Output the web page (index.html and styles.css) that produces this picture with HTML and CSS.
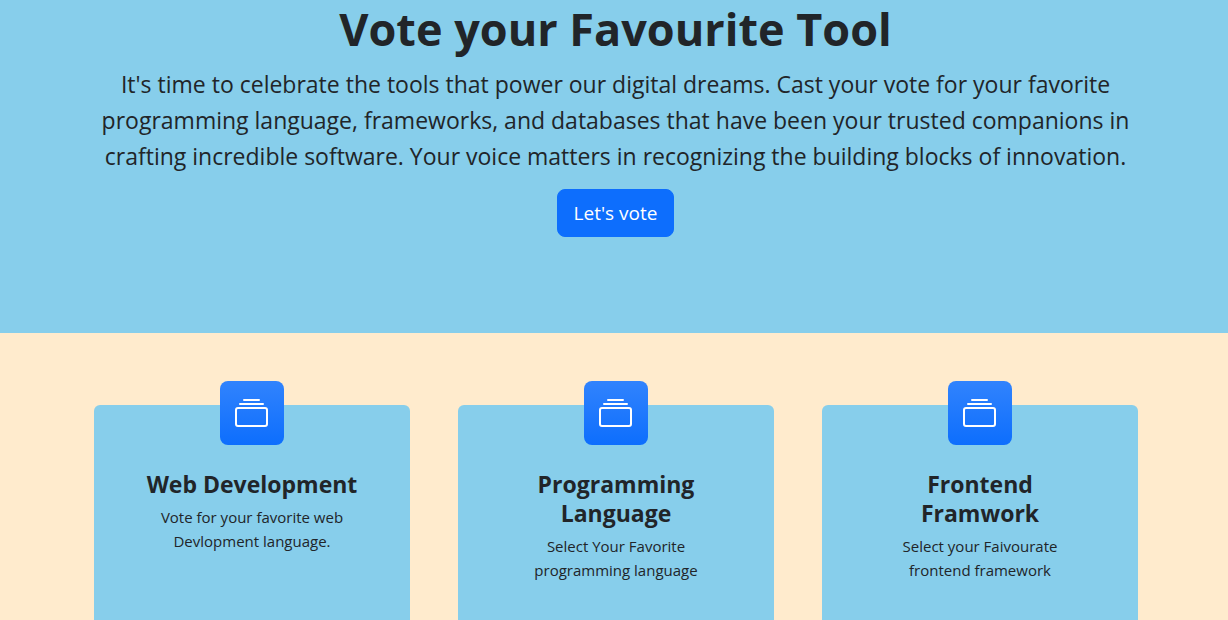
FILE: index.html
```html
<!DOCTYPE html>
<html lang="en">
<head>
<meta charset="utf-8">
<meta name="viewport" content="width=device-width, initial-scale=1">
<title>Vote your Favourite Tool</title>
<link rel="stylesheet" href="styles.css">
</head>
<body>
<svg class="sprite" aria-hidden="true">
  <symbol id="collection" viewBox="0 0 34 28">
    <path d="M9 0h15a1 1 0 0 1 0 2H9a1 1 0 0 1 0-2zM5 4h23a1 1 0 0 1 0 2H5a1 1 0 0 1 0-2z"/>
    <path fill-rule="evenodd" d="M3 8h27a3 3 0 0 1 3 3v14a3 3 0 0 1-3 3H3a3 3 0 0 1-3-3V11a3 3 0 0 1 3-3zm0 2a1 1 0 0 0-1 1v14a1 1 0 0 0 1 1h27a1 1 0 0 0 1-1V11a1 1 0 0 0-1-1z"/>
  </symbol>
</svg>
<header class="hero">
  <div class="hero-inner">
    <h1 class="hero-title">Vote your Favourite Tool</h1>
    <p class="hero-text">It's time to celebrate the tools that power our digital dreams. Cast your vote for your favorite programming language, frameworks, and databases that have been your trusted companions in crafting incredible software. Your voice matters in recognizing the building blocks of innovation.</p>
    <button class="vote-button" type="button">Let's vote</button>
  </div>
</header>
<main class="features">
  <div class="cards">
    <article class="card">
      <div class="card-icon"><svg class="icon" aria-hidden="true"><use href="#collection"/></svg></div>
      <h2 class="card-title">Web Development</h2>
      <p class="card-text">Vote for your favorite web Devlopment language.</p>
    </article>
    <article class="card">
      <div class="card-icon"><svg class="icon" aria-hidden="true"><use href="#collection"/></svg></div>
      <h2 class="card-title">Programming Language</h2>
      <p class="card-text">Select Your Favorite programming language</p>
    </article>
    <article class="card">
      <div class="card-icon"><svg class="icon" aria-hidden="true"><use href="#collection"/></svg></div>
      <h2 class="card-title">Frontend Framwork</h2>
      <p class="card-text">Select your Faivourate frontend framework</p>
    </article>
  </div>
</main>
</body>
</html>
```
FILE: styles.css
```css
* { box-sizing: border-box; }
body {
  margin: 0;
  background: #ffebcd;
  color: #212529;
  font-family: "Open Sans", "Noto Sans", sans-serif;
  font-size: 15px;
  line-height: 24px;
  overflow-x: hidden;
}
.sprite { display: none; }
.hero {
  background: #87ceeb;
  padding: 0 0 96px 3px;
  text-align: center;
}
.hero-inner {
  max-width: 1044px;
  margin: 0 auto;
}
.hero-title {
  margin: 0 0 8px;
  font-size: 45px;
  line-height: 58px;
  font-weight: 700;
}
.hero-text {
  margin: 0 0 15px;
  font-size: 23px;
  line-height: 36px;
  font-weight: 400;
}
.vote-button {
  display: block;
  margin: 0 auto;
  padding: 8px 16px;
  border: 1px solid #0d6efd;
  border-radius: 8px;
  background: #0d6efd;
  color: #fff;
  font-family: inherit;
  font-size: 19px;
  line-height: 30px;
  cursor: pointer;
}
.features { padding: 72px 0 0 4px; }
.cards {
  display: grid;
  grid-template-columns: repeat(3, 1fr);
  gap: 48px;
  max-width: 1044px;
  margin: 0 auto;
}
.card {
  padding: 0 48px 38px;
  border-radius: 6px 6px 0 0;
  background: #87ceeb;
  text-align: center;
}
.card-icon {
  display: flex;
  align-items: center;
  justify-content: center;
  width: 64px;
  height: 64px;
  margin: -24px auto 25px;
  border-radius: 8px;
  background: linear-gradient(#3183fd, #0d6efd);
  color: #fff;
}
.icon {
  width: 34px;
  height: 28px;
  fill: currentColor;
}
.card-title {
  margin: 0 0 6px;
  font-size: 23px;
  line-height: 29px;
  font-weight: 700;
}
.card-text { margin: 0; }
```
